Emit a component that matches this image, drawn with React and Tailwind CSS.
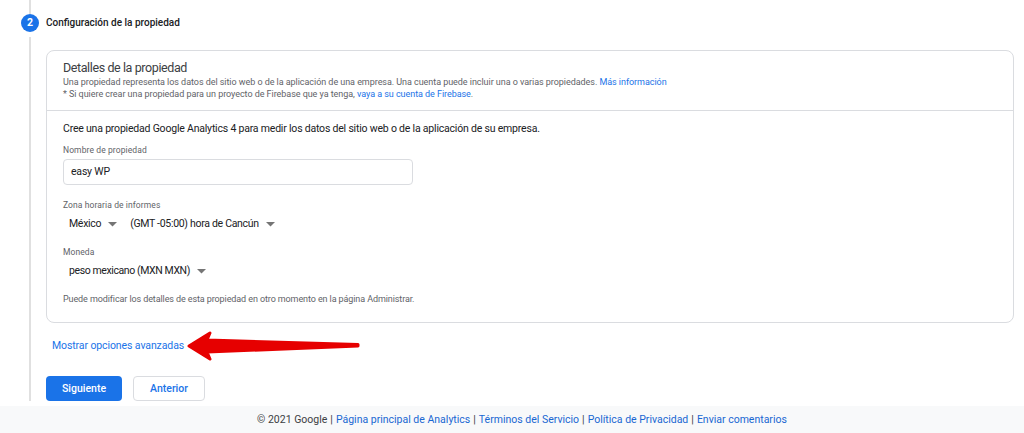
import { Fragment } from 'react'

const Caret = () => (
  <svg width="9" height="5" viewBox="0 0 9 5" className="ml-[7px] inline-block">
    <path d="M0 0 L9 0 L4.5 4.5 Z" fill="#757575" />
  </svg>
)

const Arrow = () => (
  <svg width="176" height="32" viewBox="0 0 176 32" className="absolute left-[186px] top-[330px]">
    <path
      d="M3 16 L24 3 L21 10 L172 14.5 L172 16 L21 22 L24 29 Z"
      fill="#e60000"
      stroke="#e60000"
      strokeWidth="3"
      strokeLinejoin="round"
    />
  </svg>
)

const footerLinks = [
  'Página principal de Analytics',
  'Términos del Servicio',
  'Política de Privacidad',
  'Enviar comentarios',
]

export default function App() {
  return (
    <div className="relative flex h-[433px] w-[1024px] flex-col overflow-hidden bg-white font-['Roboto',sans-serif] text-[#202124]">
      <div className="flex flex-1">
        {/* stepper rail */}
        <div className="ml-[21px] flex w-[18px] flex-col items-center">
          <div className="h-[14px] w-[2px] bg-[#e0e0e0]" />
          <div className="flex h-[18px] w-[18px] items-center justify-center rounded-full bg-[#1a73e8] text-[10.5px] font-bold text-white">
            2
          </div>
          <div className="mt-[5px] w-[2px] flex-1 bg-[#e0e0e0]" />
        </div>

        <div className="ml-[7px] mr-[10px] flex flex-1 flex-col">
          <div className="pt-[14px] text-[10px] font-medium leading-[18px]">Configuración de la propiedad</div>

          <div className="mt-[18px] rounded-[8px] border border-[#dadce0]">
            <div className="border-b border-[#dadce0] px-[16px] pb-[10px] pt-[9px]">
              <div className="text-[12.5px] leading-[16px] tracking-[-0.4px] text-[#3c4043]">Detalles de la propiedad</div>
              <div className="text-[9px] leading-[12px] tracking-[-0.05px] text-[#5f6368]">
                Una propiedad representa los datos del sitio web o de la aplicación de una empresa. Una cuenta puede incluir una o varias propiedades.{' '}
                <span className="text-[#1a73e8]">Más información</span>
              </div>
              <div className="text-[9px] leading-[12px] tracking-[-0.05px] text-[#5f6368]">
                * Si quiere crear una propiedad para un proyecto de Firebase que ya tenga,{' '}
                <span className="text-[#1a73e8]">vaya a su cuenta de Firebase</span>.
              </div>
            </div>

            <div className="px-[16px] pb-[17px] pt-[10px]">
              <div className="text-[10.5px] leading-[16px] tracking-[-0.2px]">
                Cree una propiedad Google Analytics 4 para medir los datos del sitio web o de la aplicación de su empresa.
              </div>

              <div className="mt-[7px] text-[8.5px] leading-[12px] tracking-[0.1px] text-[#5f6368]">Nombre de propiedad</div>
              <div className="mt-[3px] flex h-[26px] w-[350px] items-center rounded-[4px] border border-[#dadce0] px-[7px] text-[10.5px] tracking-[-0.2px]">
                easy WP
              </div>

              <div className="mt-[14px] text-[8.5px] leading-[12px] tracking-[0.1px] text-[#5f6368]">Zona horaria de informes</div>
              <div className="mt-[5px] flex items-center pl-[6px] text-[10.5px] leading-[16px] tracking-[-0.3px]">
                <span>México</span>
                <Caret />
                <span className="ml-[13px]">(GMT -05:00) hora de Cancún</span>
                <Caret />
              </div>

              <div className="mt-[14px] text-[8.5px] leading-[12px] tracking-[0.1px] text-[#5f6368]">Moneda</div>
              <div className="mt-[5px] flex items-center pl-[6px] text-[10.5px] leading-[16px] tracking-[-0.4px]">
                <span>peso mexicano (MXN MXN)</span>
                <Caret />
              </div>

              <div className="mt-[14px] text-[9px] leading-[12px] tracking-[-0.1px] text-[#5f6368]">
                Puede modificar los detalles de esta propiedad en otro momento en la página Administrar.
              </div>
            </div>
          </div>

          <div className="ml-[6px] mt-[15px] text-[10.5px] leading-[16px] tracking-[-0.1px] text-[#1a73e8]">Mostrar opciones avanzadas</div>

          <div className="mt-[22px] flex gap-[11px]">
            <button className="h-[25px] w-[76px] rounded-[4px] bg-[#1a73e8] text-[10.5px] font-medium text-white">Siguiente</button>
            <button className="h-[25px] w-[72px] rounded-[4px] border border-[#dadce0] bg-white text-[10.5px] font-medium text-[#1a73e8]">Anterior</button>
          </div>
        </div>
      </div>

      <div className="mt-[5px] flex h-[28px] items-center justify-center bg-[#f8f9fa] pl-[20px] text-[10.5px] text-[#3c4043]">
        <span>© 2021 Google</span>
        {footerLinks.map((l) => (
          <Fragment key={l}>
            <span className="mx-[3px]">|</span>
            <span className="text-[#1967d2]">{l}</span>
          </Fragment>
        ))}
      </div>

      <Arrow />
    </div>
  )
}
